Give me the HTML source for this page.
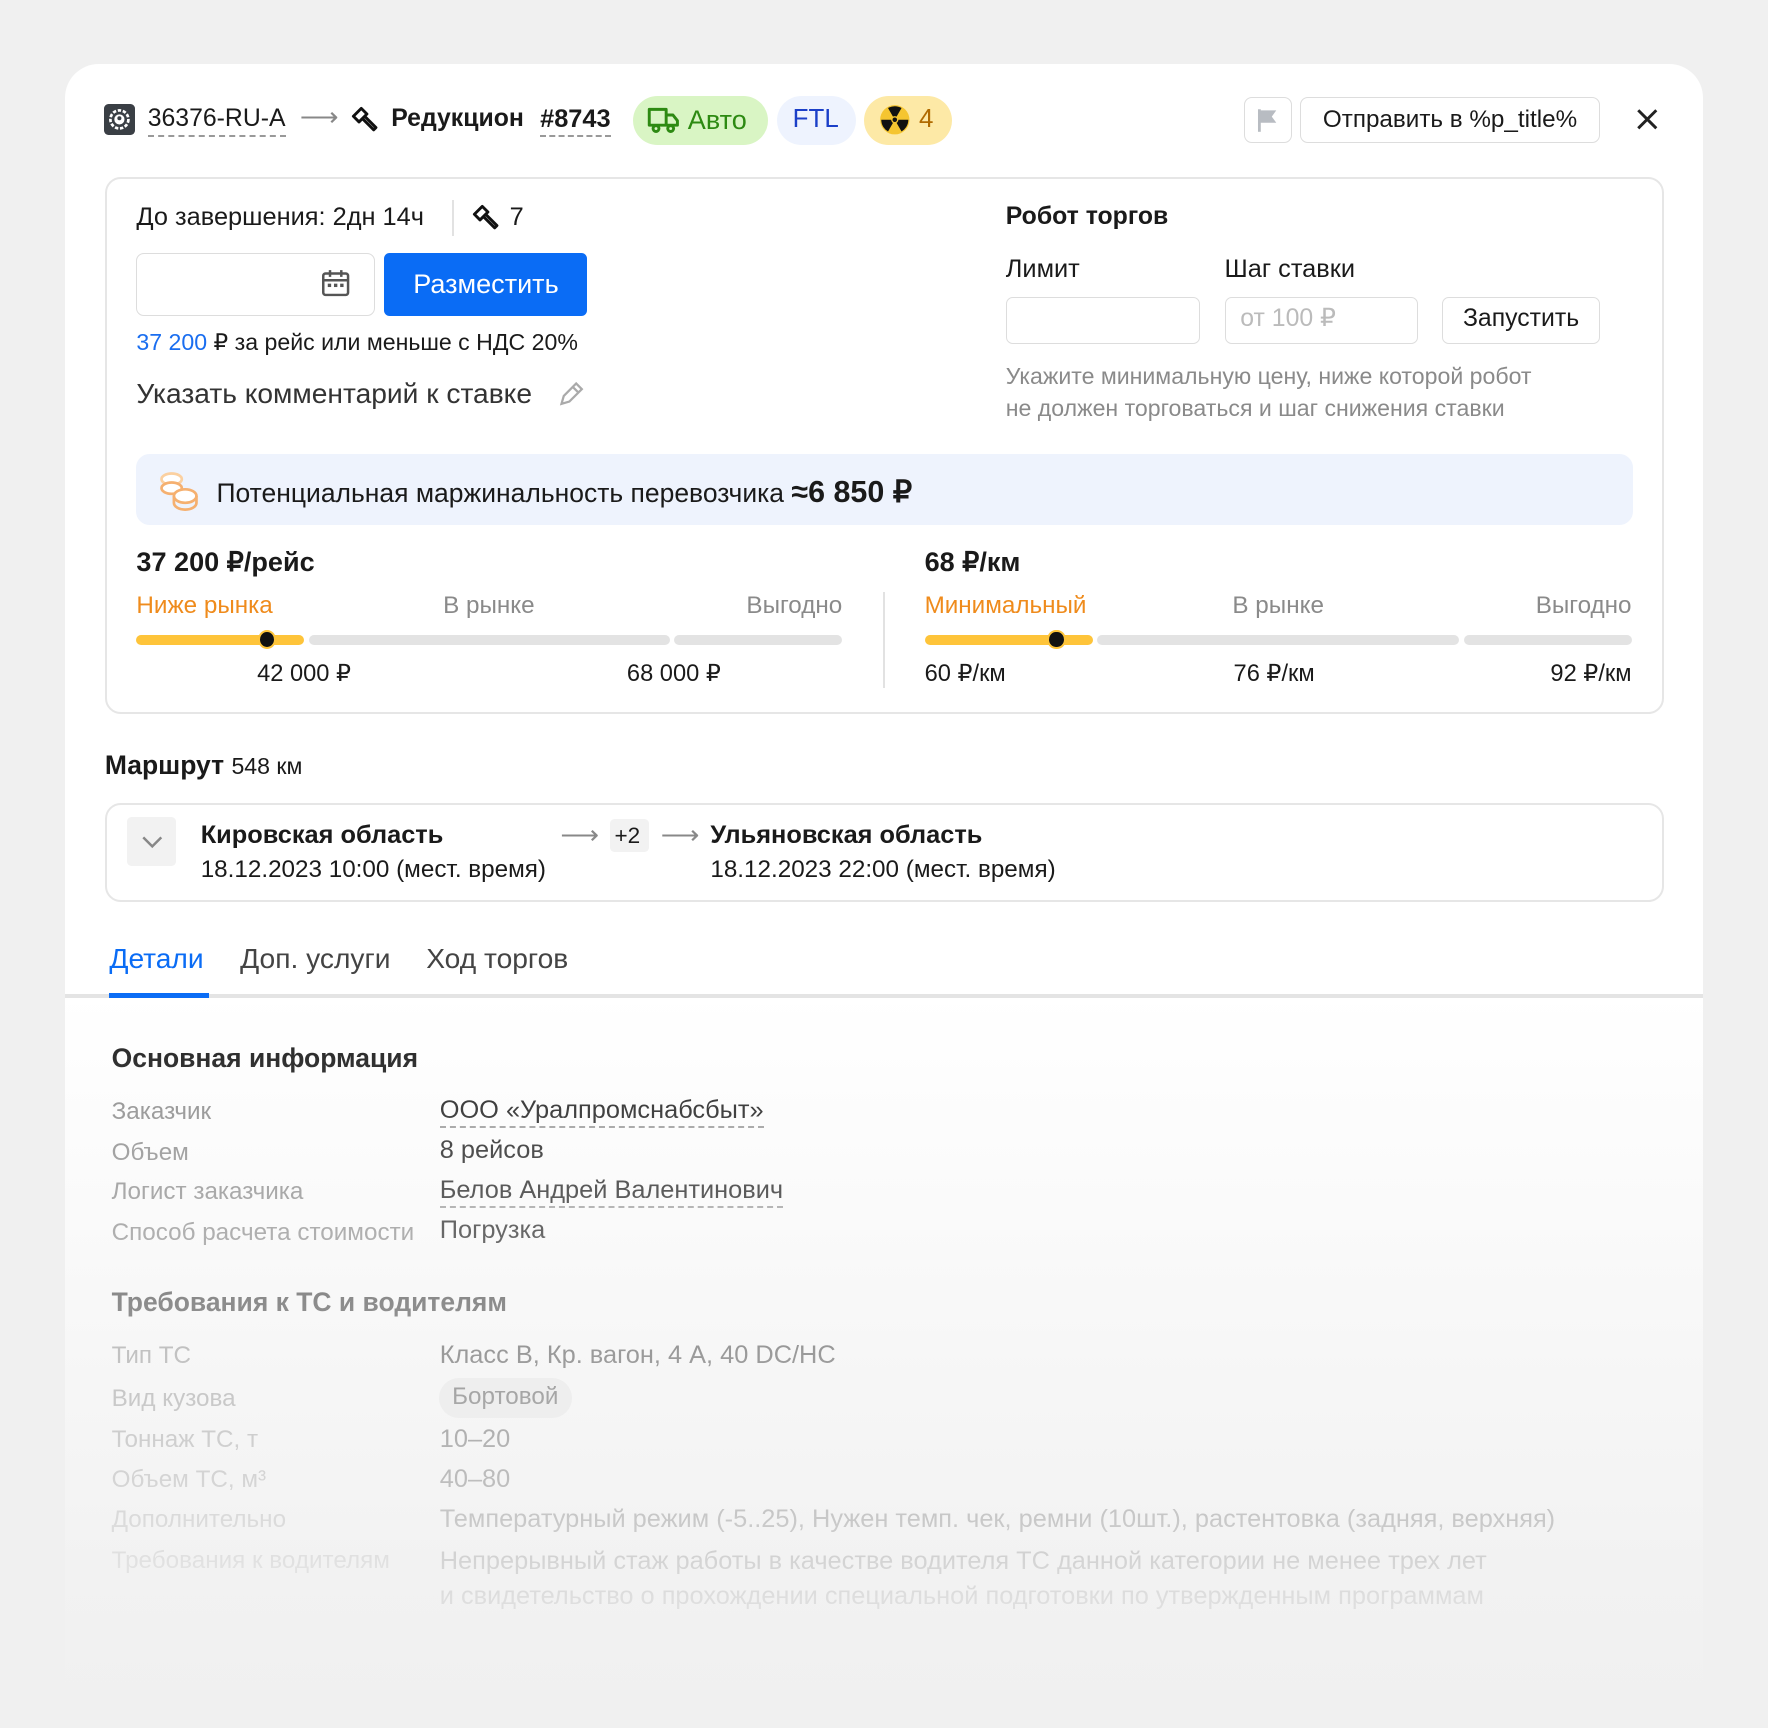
<!DOCTYPE html>
<html><head><meta charset="utf-8"><style>
*{box-sizing:border-box;margin:0;padding:0}
html,body{width:1768px;height:1728px;overflow:hidden;background:#f0f0f0}
#root{position:relative;width:1568px;height:1533px;zoom:1.12755;font-family:"Liberation Sans","Noto Sans CJK SC",sans-serif;color:#1a1a1a}
.a{position:absolute;white-space:nowrap;line-height:1.2}
.r{text-align:right}
.card{position:absolute;left:58px;top:57px;width:1452px;height:1480px;background:#fff;border-radius:30px}
.box{position:absolute;border:2px solid #e6e6e6;border-radius:14px;background:#fff}
.g{color:#8a8a8a}
.dash{border-bottom:2px dashed #999;padding-bottom:1px}
.bar{position:absolute;height:9px;border-radius:5px}
.fade{position:absolute;left:0;top:880px;width:1568px;height:653px;background:linear-gradient(to bottom,rgba(240,240,240,0) 0%,rgba(240,240,240,.5) 45%,rgba(240,240,240,.9) 82%,#f0f0f0 100%)}
</style></head><body><div id="root">
<div class="card"></div>

<!-- header -->
<div class="a" style="left:92px;top:92px;width:28px;height:28px;background:#3a3f45;border-radius:4px"></div>
<svg class="a" style="left:95px;top:95px" width="22" height="22" viewBox="0 0 22 22"><circle cx="11" cy="11" r="8" fill="none" stroke="#fff" stroke-width="2.4" stroke-dasharray="3 1.5"/><circle cx="11" cy="11" r="4.5" fill="#fff"/><circle cx="11" cy="10" r="1.8" fill="#3a3f45"/></svg>
<div class="a dash" style="left:131px;top:92px;font-size:22px">36376-RU-A</div>
<div class="a" style="left:266px;top:90px;font-size:24px;color:#888">⟶</div>
<svg class="a" style="left:310px;top:93px" width="26" height="26" viewBox="0 0 26 26"><g fill="none" stroke="#111" stroke-width="2.6" stroke-linejoin="round"><path d="M3 10 L10 3 L15 8 L8 15 Z"/><path d="M11 12 L21 22 L23 20 L13 10"/></g></svg>
<div class="a" style="left:347px;top:92px;font-size:22px;font-weight:bold">Редукцион</div>
<div class="a dash" style="left:479px;top:92px;font-size:22.5px;font-weight:bold">#8743</div>
<div class="a" style="left:561px;top:85px;width:120px;height:44px;border-radius:22px;background:#d9f5c4"></div>
<svg class="a" style="left:574px;top:94px" width="30" height="26" viewBox="0 0 30 26"><g fill="none" stroke="#2d8a12" stroke-width="2.6" stroke-linejoin="round"><rect x="2" y="3" width="15" height="14"/><path d="M17 8 H23 L27 13 V17 H17"/><circle cx="8" cy="20" r="2.6" fill="#d9f5c4"/><circle cx="21" cy="20" r="2.6" fill="#d9f5c4"/></g></svg>
<div class="a" style="left:610px;top:92px;font-size:24px;color:#2d8a12">Авто</div>
<div class="a" style="left:689px;top:85px;width:70px;height:44px;border-radius:22px;background:#eef3fe"></div>
<div class="a" style="left:703px;top:92px;font-size:23px;color:#1b3fc8">FTL</div>
<div class="a" style="left:766px;top:85px;width:78px;height:44px;border-radius:22px;background:#fde9a6"></div>
<svg class="a" style="left:780px;top:92px" width="28" height="28" viewBox="0 0 28 28"><circle cx="14" cy="14" r="13" fill="#f5c530"/><g fill="#111"><path d="M14 14 L8 3.6 A12 12 0 0 1 20 3.6 Z"/><path d="M14 14 L26 14 A12 12 0 0 1 20 24.4 Z"/><path d="M14 14 L8 24.4 A12 12 0 0 1 2 14 Z"/></g><circle cx="14" cy="14" r="3.2" fill="#f5c530"/><circle cx="14" cy="14" r="2" fill="#111"/></svg>
<div class="a" style="left:815px;top:92px;font-size:23px;color:#b06a00">4</div>

<div class="a" style="left:1103px;top:86px;width:43px;height:41px;border:1.5px solid #ddd;border-radius:7px"></div>
<svg class="a" style="left:1114px;top:95px" width="22" height="24" viewBox="0 0 22 24"><path d="M3 2 V22" stroke="#b8bcc2" stroke-width="2.5"/><path d="M4 3 H18 L14 8.5 L18 14 H4 Z" fill="#b8bcc2"/></svg>
<div class="a" style="left:1153px;top:86px;width:266px;height:41px;border:1.5px solid #ddd;border-radius:7px"></div>
<div class="a" style="left:1153px;top:93px;width:266px;text-align:center;font-size:21.5px">Отправить в %p_title%</div>
<svg class="a" style="left:1451px;top:96px" width="20" height="20" viewBox="0 0 20 20"><path d="M2 2 L18 18 M18 2 L2 18" stroke="#222" stroke-width="2.6"/></svg>

<!-- bid box -->
<div class="box" style="left:93px;top:157px;width:1383px;height:476px"></div>
<div class="a" style="left:121px;top:179px;font-size:22.5px">До завершения: 2дн 14ч</div>
<div class="a" style="left:401px;top:177px;width:2px;height:32px;background:#e2e2e2"></div>
<svg class="a" style="left:418px;top:180px" width="26" height="26" viewBox="0 0 26 26"><g fill="none" stroke="#111" stroke-width="2.6" stroke-linejoin="round"><path d="M3 10 L10 3 L15 8 L8 15 Z"/><path d="M11 12 L21 22 L23 20 L13 10"/></g></svg>
<div class="a" style="left:452px;top:179px;font-size:22.5px">7</div>

<div class="a" style="left:121px;top:224px;width:212px;height:56px;border:1.5px solid #ddd;border-radius:7px"></div>
<svg class="a" style="left:285px;top:239px" width="26" height="26" viewBox="0 0 26 26"><g fill="none" stroke="#555" stroke-width="2.2"><rect x="2" y="4" width="22" height="19" rx="2"/><path d="M2 10 H24 M8 1 V7 M18 1 V7"/></g><g fill="#555"><rect x="6" y="13" width="3" height="3"/><rect x="11.5" y="13" width="3" height="3"/><rect x="17" y="13" width="3" height="3"/></g></svg>
<div class="a" style="left:341px;top:224px;width:180px;height:56px;background:#0a6cf5;border-radius:5px"></div>
<div class="a" style="left:341px;top:238px;width:180px;text-align:center;font-size:24px;color:#fff">Разместить</div>
<div class="a" style="left:121px;top:292px;font-size:20.5px"><span style="color:#1a6ef0">37 200</span> ₽ за рейс или меньше с НДС 20%</div>
<div class="a" style="left:121px;top:334px;font-size:25px;color:#333">Указать комментарий к ставке</div>
<svg class="a" style="left:494px;top:336px" width="26" height="26" viewBox="0 0 26 26"><path d="M4 22 L6 15 L17 4 L22 9 L11 20 Z M14 7 L19 12" fill="none" stroke="#aaa" stroke-width="2"/></svg>

<div class="a" style="left:892px;top:179px;font-size:22px;font-weight:bold">Робот торгов</div>
<div class="a" style="left:892px;top:225px;font-size:22.5px">Лимит</div>
<div class="a" style="left:1086px;top:225px;font-size:22.5px">Шаг ставки</div>
<div class="a" style="left:892px;top:263px;width:172px;height:42px;border:1.5px solid #ddd;border-radius:6px"></div>
<div class="a" style="left:1086px;top:263px;width:172px;height:42px;border:1.5px solid #ddd;border-radius:6px"></div>
<div class="a" style="left:1100px;top:270px;font-size:22px;color:#bbb">от 100 ₽</div>
<div class="a" style="left:1279px;top:263px;width:140px;height:42px;border:1.5px solid #ddd;border-radius:6px"></div>
<div class="a" style="left:1279px;top:270px;width:140px;text-align:center;font-size:22px">Запустить</div>
<div class="a g" style="left:892px;top:319px;font-size:20.5px;line-height:29px">Укажите минимальную цену, ниже которой робот<br>не должен торговаться и шаг снижения ставки</div>

<div class="a" style="left:121px;top:403px;width:1327px;height:63px;background:#eef3fd;border-radius:12px"></div>
<svg class="a" style="left:139px;top:416px" width="40" height="38" viewBox="0 0 40 38"><g fill="#fff" stroke="#f5b070" stroke-width="2.4"><ellipse cx="13" cy="9" rx="9" ry="5" stroke="#fbd0a0"/><ellipse cx="13" cy="17" rx="9" ry="5"/><ellipse cx="25" cy="24" rx="10" ry="6"/><path d="M15 24 V30 A10 6 0 0 0 35 30 V24" fill="none"/></g></svg>
<div class="a" style="left:192px;top:420px;font-size:23.5px">Потенциальная маржинальность перевозчика <b style="font-size:27px">≈6 850 ₽</b></div>

<div class="a" style="left:121px;top:484px;font-size:24px;font-weight:bold">37 200 ₽/рейс</div>
<div class="a" style="left:121px;top:524px;font-size:21.5px;color:#ef8b1c">Ниже рынка</div>
<div class="a g" style="left:393px;top:524px;font-size:21.5px">В рынке</div>
<div class="a g r" style="left:547px;width:200px;top:524px;font-size:21.5px">Выгодно</div>
<div class="bar" style="left:121px;top:563px;width:149px;background:#fec43a"></div>
<div class="bar" style="left:274px;top:563px;width:320px;background:#e3e3e3"></div>
<div class="bar" style="left:598px;top:563px;width:149px;background:#e3e3e3"></div>
<div class="a" style="left:229px;top:559px;width:16px;height:17px;border-radius:50%;background:#111;border:2px solid #fec43a"></div>
<div class="a" style="left:228px;top:585px;font-size:21px">42 000 ₽</div>
<div class="a" style="left:556px;top:585px;font-size:21px">68 000 ₽</div>

<div class="a" style="left:783px;top:525px;width:2px;height:85px;background:#e2e2e2"></div>

<div class="a" style="left:820px;top:484px;font-size:24px;font-weight:bold">68 ₽/км</div>
<div class="a" style="left:820px;top:524px;font-size:21.5px;color:#ef8b1c">Минимальный</div>
<div class="a g" style="left:1093px;top:524px;font-size:21.5px">В рынке</div>
<div class="a g r" style="left:1247px;width:200px;top:524px;font-size:21.5px">Выгодно</div>
<div class="bar" style="left:820px;top:563px;width:149px;background:#fec43a"></div>
<div class="bar" style="left:973px;top:563px;width:321px;background:#e3e3e3"></div>
<div class="bar" style="left:1298px;top:563px;width:149px;background:#e3e3e3"></div>
<div class="a" style="left:929px;top:559px;width:16px;height:17px;border-radius:50%;background:#111;border:2px solid #fec43a"></div>
<div class="a" style="left:820px;top:585px;font-size:21px">60 ₽/км</div>
<div class="a" style="left:1094px;top:585px;font-size:21px">76 ₽/км</div>
<div class="a r" style="left:1247px;width:200px;top:585px;font-size:21px">92 ₽/км</div>

<!-- route -->
<div class="a" style="left:93px;top:665px;font-size:23.5px;font-weight:bold">Маршрут <span style="font-weight:normal;font-size:20.5px">548 км</span></div>
<div class="box" style="left:93px;top:712px;width:1383px;height:88px"></div>
<div class="a" style="left:113px;top:725px;width:43px;height:43px;background:#f2f2f2;border-radius:4px"></div>
<svg class="a" style="left:125px;top:740px" width="20" height="14" viewBox="0 0 20 14"><path d="M2 3 L10 11 L18 3" fill="none" stroke="#888" stroke-width="2.2"/></svg>
<div class="a" style="left:178px;top:727px;font-size:22.5px;font-weight:bold">Кировская область</div>
<div class="a" style="left:178px;top:758px;font-size:21.5px">18.12.2023 10:00 (мест. время)</div>
<div class="a" style="left:497px;top:726px;font-size:24px;color:#888">⟶</div>
<div class="a" style="left:541px;top:726px;width:35px;height:30px;background:#f2f2f2;border-radius:4px"></div>
<div class="a" style="left:545px;top:729px;font-size:20px">+2</div>
<div class="a" style="left:586px;top:726px;font-size:24px;color:#888">⟶</div>
<div class="a" style="left:630px;top:727px;font-size:22.5px;font-weight:bold">Ульяновская область</div>
<div class="a" style="left:630px;top:758px;font-size:21.5px">18.12.2023 22:00 (мест. время)</div>

<!-- tabs -->
<div class="a" style="left:97px;top:835px;font-size:25px;color:#0a6cf5">Детали</div>
<div class="a" style="left:213px;top:835px;font-size:25px;color:#444">Доп. услуги</div>
<div class="a" style="left:378px;top:835px;font-size:25px;color:#444">Ход торгов</div>
<div class="a" style="left:58px;top:882px;width:1452px;height:3px;background:#e4e4e4"></div>
<div class="a" style="left:97px;top:881px;width:88px;height:4px;background:#0a6cf5"></div>

<!-- details -->
<div class="a" style="left:99px;top:925px;font-size:23.5px;font-weight:bold">Основная информация</div>
<div class="a g" style="left:99px;top:973px;font-size:21.5px">Заказчик</div>
<div class="a dash" style="left:390px;top:971px;font-size:22.5px">ООО «Уралпромснабсбыт»</div>
<div class="a g" style="left:99px;top:1009px;font-size:21.5px">Объем</div>
<div class="a" style="left:390px;top:1007px;font-size:22.5px">8 рейсов</div>
<div class="a g" style="left:99px;top:1044px;font-size:21.5px">Логист заказчика</div>
<div class="a dash" style="left:390px;top:1042px;font-size:22.5px">Белов Андрей Валентинович</div>
<div class="a g" style="left:99px;top:1080px;font-size:21.5px">Способ расчета стоимости</div>
<div class="a" style="left:390px;top:1078px;font-size:22.5px">Погрузка</div>

<div class="a" style="left:99px;top:1141px;font-size:23.5px;font-weight:bold;color:#333">Требования к ТС и водителям</div>
<div class="a g" style="left:99px;top:1189px;font-size:21.5px">Тип ТС</div>
<div class="a" style="left:390px;top:1188px;font-size:22.5px;color:#333">Класс B, Кр. вагон, 4 A, 40 DC/HC</div>
<div class="a g" style="left:99px;top:1227px;font-size:21.5px">Вид кузова</div>
<div class="a" style="left:389px;top:1222px;width:118px;height:36px;background:#eaeaea;border-radius:18px"></div>
<div class="a" style="left:401px;top:1226px;font-size:21.5px;color:#333">Бортовой</div>
<div class="a g" style="left:99px;top:1264px;font-size:21.5px">Тоннаж ТС, т</div>
<div class="a" style="left:390px;top:1263px;font-size:22.5px;color:#333">10–20</div>
<div class="a g" style="left:99px;top:1299px;font-size:21.5px">Объем ТС, м³</div>
<div class="a" style="left:390px;top:1298px;font-size:22.5px;color:#333">40–80</div>
<div class="a g" style="left:99px;top:1335px;font-size:21.5px">Дополнительно</div>
<div class="a" style="left:390px;top:1334px;font-size:22.5px;color:#333">Температурный режим (-5..25), Нужен темп. чек, ремни (10шт.), растентовка (задняя, верхняя)</div>
<div class="a g" style="left:99px;top:1371px;font-size:21.5px">Требования к водителям</div>
<div class="a" style="left:390px;top:1369px;font-size:22.5px;color:#333;line-height:31px">Непрерывный стаж работы в качестве водителя ТС данной категории не менее трех лет<br>и свидетельство о прохождении специальной подготовки по утвержденным программам</div>

<div class="fade"></div>
</div></body></html>
